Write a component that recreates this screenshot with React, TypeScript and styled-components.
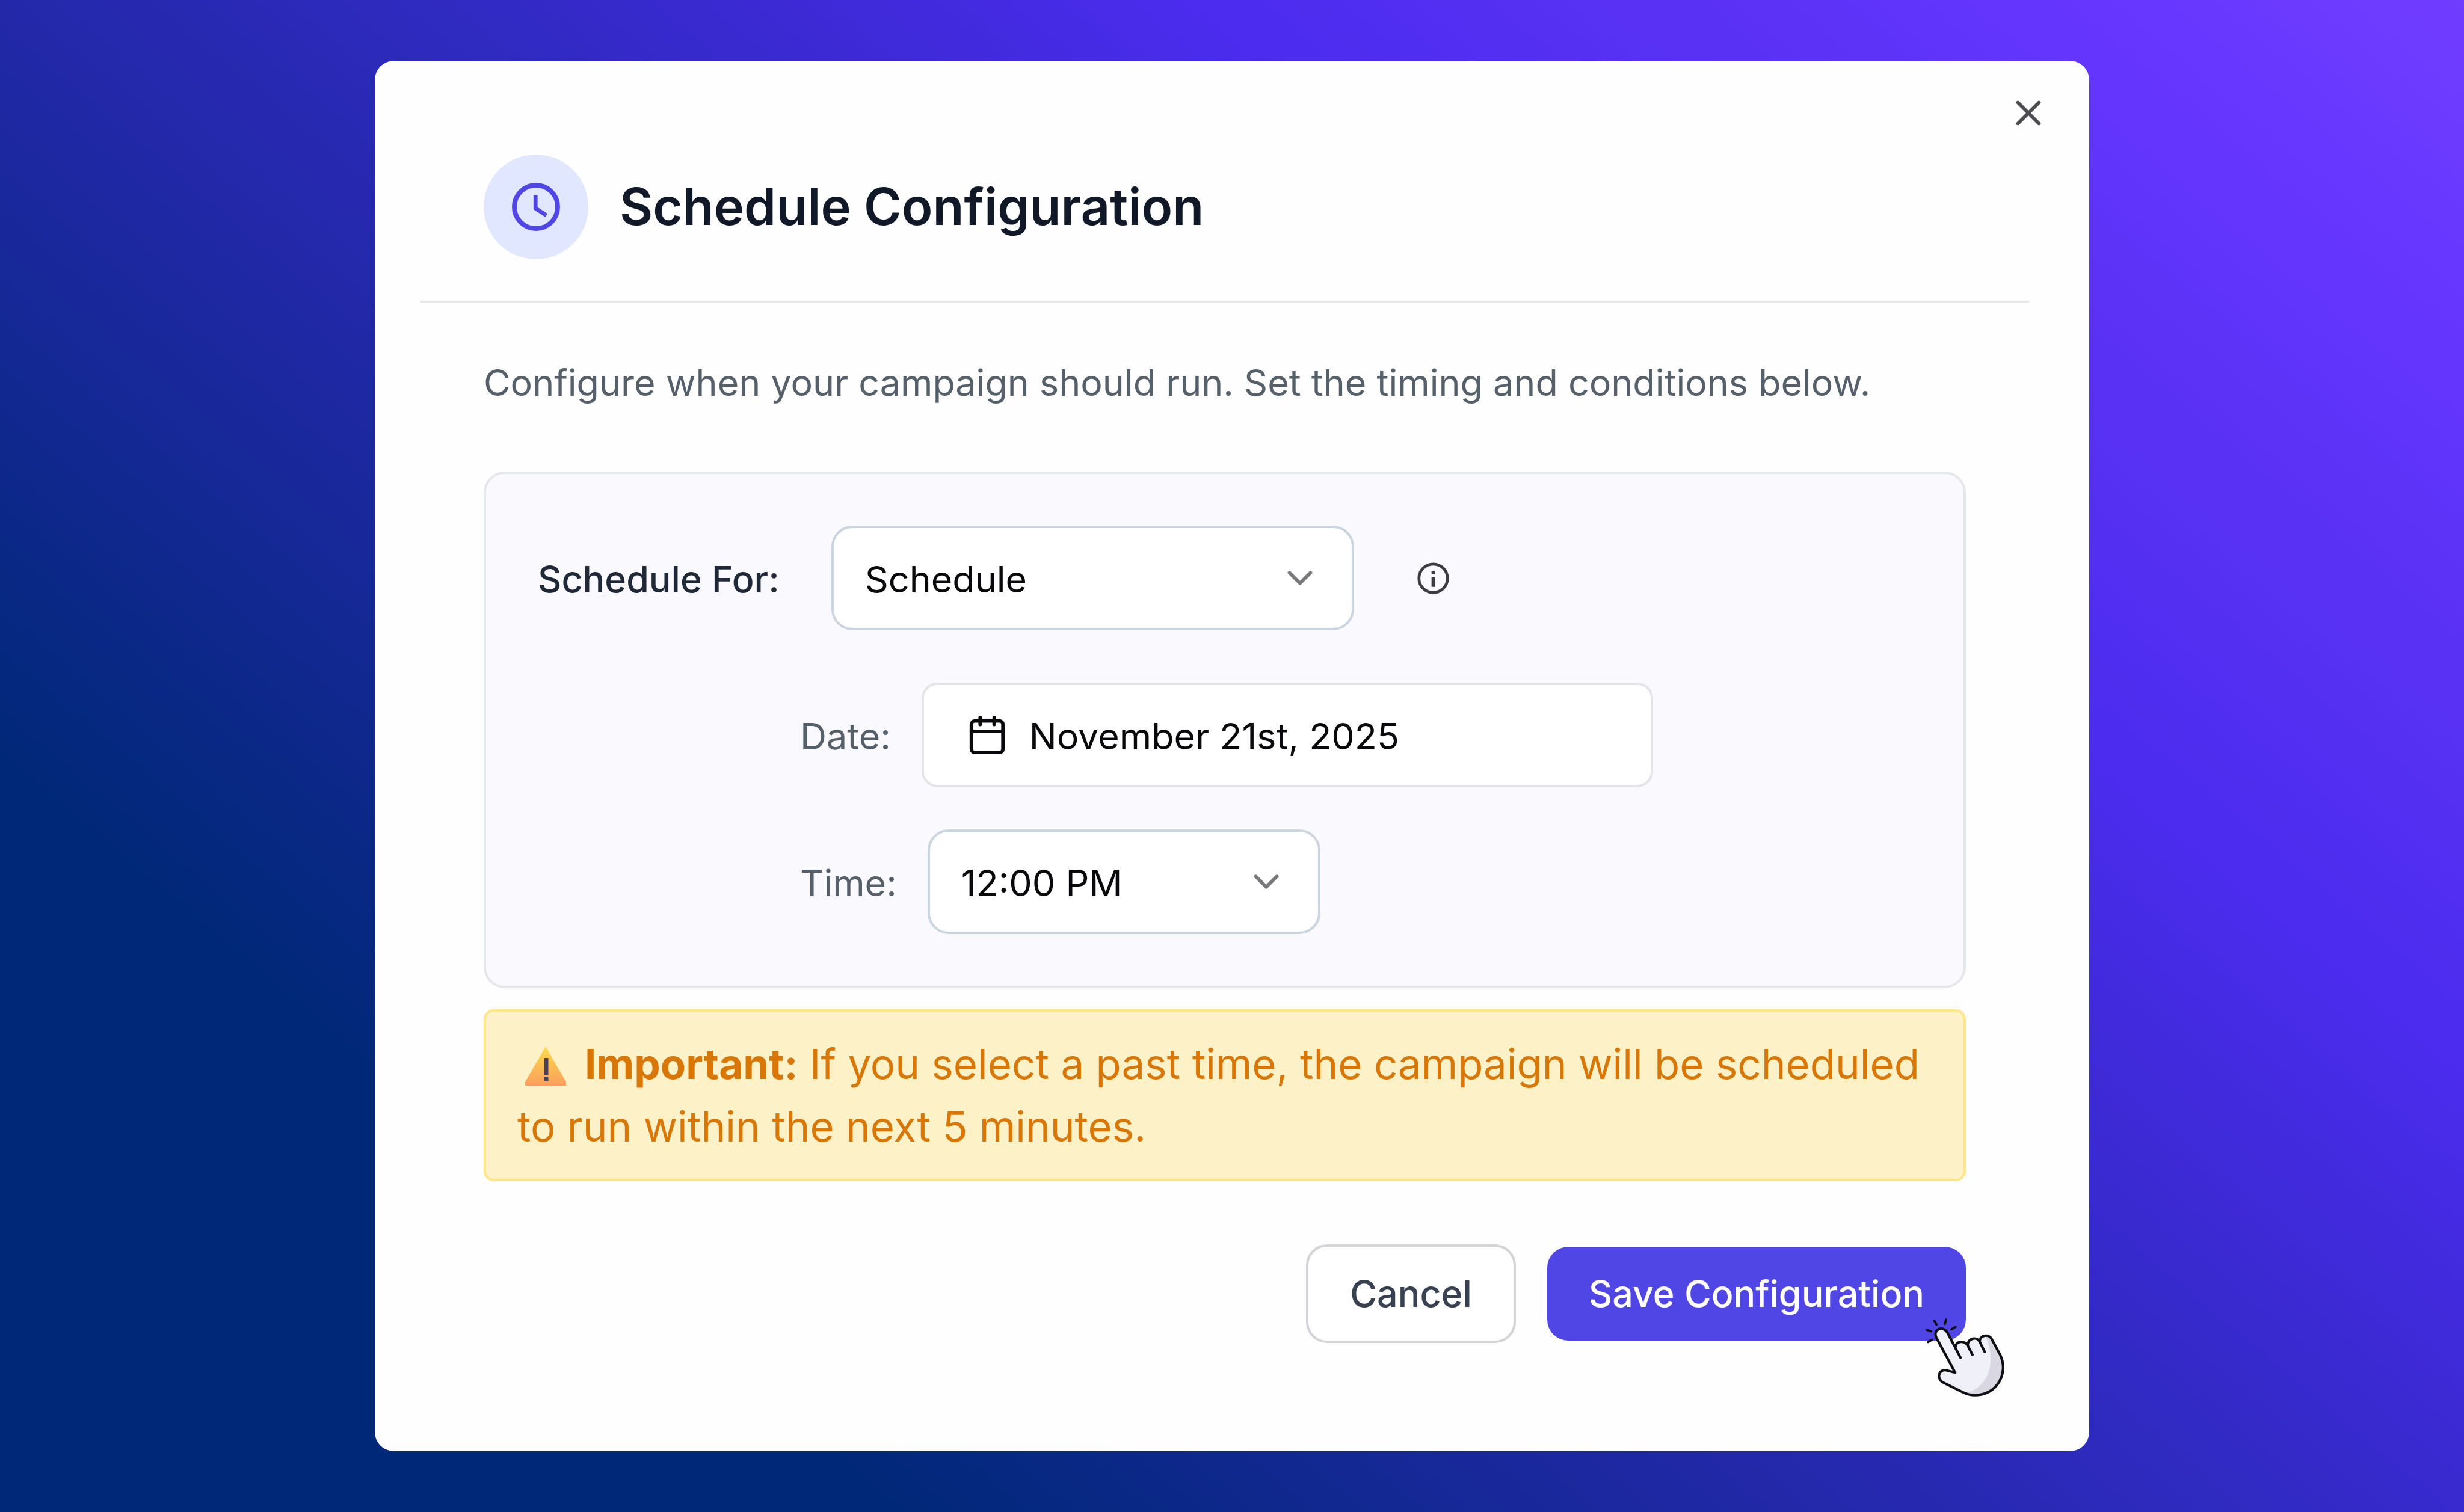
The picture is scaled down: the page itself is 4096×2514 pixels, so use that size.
import React from "react";
import styled, { createGlobalStyle } from "styled-components";

const Global = createGlobalStyle`
  * { box-sizing: border-box; }
  body { margin: 0; font-family: Inter, "Liberation Sans", sans-serif; }
  button, input, select { font: inherit; }
`;

const Backdrop = styled.main`
  min-height: 100vh;
  display: flex;
  align-items: center;
  justify-content: center;
  padding: 100px 15%;
  background: linear-gradient(40deg, #002878 0%, #002878 21%, #2228a8 42%, #2c2abb 50%, #3d2ad6 61%, #4b2cee 70%, #5b32f6 83%, #6636ff 91%, #703dff 100%);
`;

const Dialog = styled.section`
  position: relative;
  width: 100%;
  max-width: 2850px;
  padding: 156px 100px 180px 76px;
  border-radius: 32px;
  background: #fefefe;
`;

const CloseButton = styled.button`
  position: absolute;
  top: 51px;
  right: 65px;
  width: 72px;
  height: 72px;
  display: grid;
  place-items: center;
  padding: 0;
  border: 0;
  background: none;
  color: #4b4b50;
`;

const Header = styled.header`
  display: flex;
  align-items: center;
  gap: 52px;
  padding: 0 105px 69px;
  border-bottom: 4px solid #e9e9eb;
`;

const IconBadge = styled.span`
  width: 174px;
  height: 174px;
  display: grid;
  place-items: center;
  border-radius: 50%;
  background: #e0e7ff;
  color: #4f46e5;
`;

const Title = styled.h2`
  margin: 0;
  font-size: 85px;
  line-height: 120px;
  font-weight: 600;
  color: #111827;
`;

const Body = styled.div`
  padding: 84px 105px 0;
`;

const Description = styled.p`
  margin: 0;
  font-size: 61px;
  line-height: 96px;
  color: #56606b;
`;

const Panel = styled.div`
  display: flex;
  flex-direction: column;
  margin-top: 100px;
  padding: 86px;
  border: 4px solid #e5e7eb;
  border-radius: 35px;
  background: #f9f9fe;
`;

const Row = styled.div<{ $indent?: boolean; $gap: number; $top?: number }>`
  display: flex;
  align-items: center;
  gap: ${(p) => p.$gap}px;
  margin-top: ${(p) => p.$top ?? 0}px;
  padding-left: ${(p) => (p.$indent ? 436 : 0)}px;
`;

const Label = styled.label<{ $strong?: boolean }>`
  padding-top: 4px;
  font-size: 61px;
  line-height: 88px;
  font-weight: ${(p) => (p.$strong ? 500 : 400)};
  color: ${(p) => (p.$strong ? "#1f2937" : "#56606b")};
`;

const SelectWrap = styled.span<{ $width: number }>`
  display: grid;
  align-items: center;
  width: ${(p) => p.$width}px;

  > * { grid-area: 1 / 1; }
  > svg { justify-self: end; margin-right: 55px; pointer-events: none; color: #77777c; }
`;

const Select = styled.select`
  appearance: none;
  width: 100%;
  height: 174px;
  padding: 4px 52px 0;
  border: 4px solid #cbd5e1;
  border-radius: 35px;
  background: #fff;
  font-size: 61px;
  color: #09090b;
`;

const InfoButton = styled.button`
  display: grid;
  margin-left: 17px;
  padding: 0;
  border: 0;
  background: none;
  color: #3c3c41;
`;

const DateField = styled.span`
  display: flex;
  align-items: center;
  gap: 35px;
  width: 1216px;
  height: 174px;
  padding: 0 70px;
  border: 4px solid #e5e5e9;
  border-radius: 26px;
  background: #fff;
  color: #09090b;
`;

const DateInput = styled.input`
  flex: 1;
  min-width: 0;
  padding: 4px 0 0;
  border: 0;
  background: none;
  font-size: 61px;
  color: inherit;
`;

const Alert = styled.p`
  margin: 35px 0 0;
  padding: 35px 52px;
  border: 4px solid #fde68a;
  border-radius: 17px;
  background: #fdf1c8;
  font-size: 69px;
  line-height: 104px;
  color: #d97706;

  > svg { vertical-align: -11px; margin: 0 31px 0 13px; }
`;

const Actions = styled.footer`
  display: flex;
  align-items: center;
  justify-content: flex-end;
  gap: 52px;
  margin-top: 105px;
`;

const Button = styled.button<{ $primary?: boolean }>`
  padding: 34px 69px;
  border: ${(p) => (p.$primary ? "0" : "4px solid #d4d4d8")};
  border-radius: 35px;
  background: ${(p) => (p.$primary ? "#4f46e5" : "#fff")};
  font-size: 61px;
  line-height: 88px;
  font-weight: 500;
  color: ${(p) => (p.$primary ? "#fff" : "#374151")};
`;

const SaveWrap = styled.span`
  position: relative;
  display: flex;
`;

const Pointer = styled.svg`
  position: absolute;
  right: -109px;
  bottom: -116px;
  pointer-events: none;
`;

const Glyph = ({ size, stroke = 2, children }: { size: number; stroke?: number; children: React.ReactNode }) => (
  <svg width={size} height={size} viewBox="0 0 24 24" fill="none" stroke="currentColor" strokeWidth={stroke} strokeLinecap="round" strokeLinejoin="round" aria-hidden="true">
    {children}
  </svg>
);

const Chevron = () => (
  <Glyph size={70}>
    <path d="m6 9 6 6 6-6" />
  </Glyph>
);

export default function App() {
  return (
    <>
      <Global />
      <Backdrop>
        <Dialog role="dialog" aria-labelledby="title">
          <CloseButton type="button" aria-label="Close">
            <Glyph size={70}>
              <path d="M18 6 6 18M6 6l12 12" />
            </Glyph>
          </CloseButton>
          <Header>
            <IconBadge>
              <Glyph size={96}>
                <circle cx="12" cy="12" r="9" />
                <path d="M11.8 7.1v5.5l4.5 2.9" strokeWidth="1.7" strokeLinecap="butt" />
              </Glyph>
            </IconBadge>
            <Title id="title">Schedule Configuration</Title>
          </Header>
          <Body>
            <Description>Configure when your campaign should run. Set the timing and conditions below.</Description>
            <Panel>
              <Row $gap={86}>
                <Label $strong htmlFor="mode">Schedule For:</Label>
                <SelectWrap $width={869}>
                  <Select id="mode">
                    <option>Schedule</option>
                  </Select>
                  <Chevron />
                </SelectWrap>
                <InfoButton type="button" aria-label="About scheduling">
                  <Glyph size={57}>
                    <circle cx="12" cy="12" r="10" />
                    <path d="M12 11v7M12 6.8v2.4" strokeWidth="2.4" strokeLinecap="butt" />
                  </Glyph>
                </InfoButton>
              </Row>
              <Row $indent $gap={51} $top={87}>
                <Label htmlFor="date">Date:</Label>
                <DateField>
                  <Glyph size={70}>
                    <rect x="3" y="4" width="18" height="18" rx="2" />
                    <path d="M8 2v4M16 2v4M3 10h18" />
                  </Glyph>
                  <DateInput id="date" defaultValue="November 21st, 2025" />
                </DateField>
              </Row>
              <Row $indent $gap={51} $top={70}>
                <Label htmlFor="time">Time:</Label>
                <SelectWrap $width={653}>
                  <Select id="time">
                    <option>12:00 PM</option>
                  </Select>
                  <Chevron />
                </SelectWrap>
              </Row>
            </Panel>
            <Alert>
              <svg width="68" height="64" viewBox="0 0 68 64" aria-hidden="true">
                <defs>
                  <linearGradient id="warn" x1="0" y1="0" x2="0" y2="1">
                    <stop offset="0" stopColor="#fcd84a" />
                    <stop offset="1" stopColor="#fba05c" />
                  </linearGradient>
                </defs>
                <path d="M34 1 67 58V63H1V58Z" fill="url(#warn)" stroke="url(#warn)" strokeWidth="2" strokeLinejoin="round" />
                <path d="M35 18v28M35 49v7" stroke="#4a4058" strokeWidth="7" />
              </svg>
              <strong>Important:</strong> If you select a past time, the campaign will be scheduled to run within the next 5 minutes.
            </Alert>
            <Actions>
              <Button type="button">Cancel</Button>
              <SaveWrap>
                <Button type="button" $primary>Save Configuration</Button>
                <Pointer width="223" height="193" viewBox="0 0 900 780" aria-hidden="true">
                  <path d="M388 526 262 292C236 238 302 206 334 254L390 356C392 312 452 308 472 345C472 290 536 284 553 320C552 272 614 264 634 302L690 406C750 530 670 678 520 678C490 678 460 668 440 658L305 592C255 560 285 492 340 514Z" fill="#f0f0f9" />
                  <path d="M592 282C615 280 628 290 634 302L690 406C750 530 670 678 520 678C500 678 485 672 470 664C610 610 670 470 592 282Z" fill="#d9d8e2" />
                  <path d="M424 426 334 254C302 206 236 238 262 292L388 526 340 514C285 492 255 560 305 592L440 658C460 668 490 678 520 678C670 678 750 530 690 406L634 302C614 264 552 272 553 320L586 386M390 356C392 312 452 308 472 345L504 406M472 345C472 290 536 284 553 320" fill="none" stroke="#0e0e14" strokeWidth="17" strokeLinecap="round" strokeLinejoin="round" />
                  <path d="m248 178 15 26M327 170l-8 29M391 219l-28 17M197 239l30 10M206 321l27-16" stroke="#0e0e14" strokeWidth="15" strokeLinecap="round" />
                </Pointer>
              </SaveWrap>
            </Actions>
          </Body>
        </Dialog>
      </Backdrop>
    </>
  );
}
